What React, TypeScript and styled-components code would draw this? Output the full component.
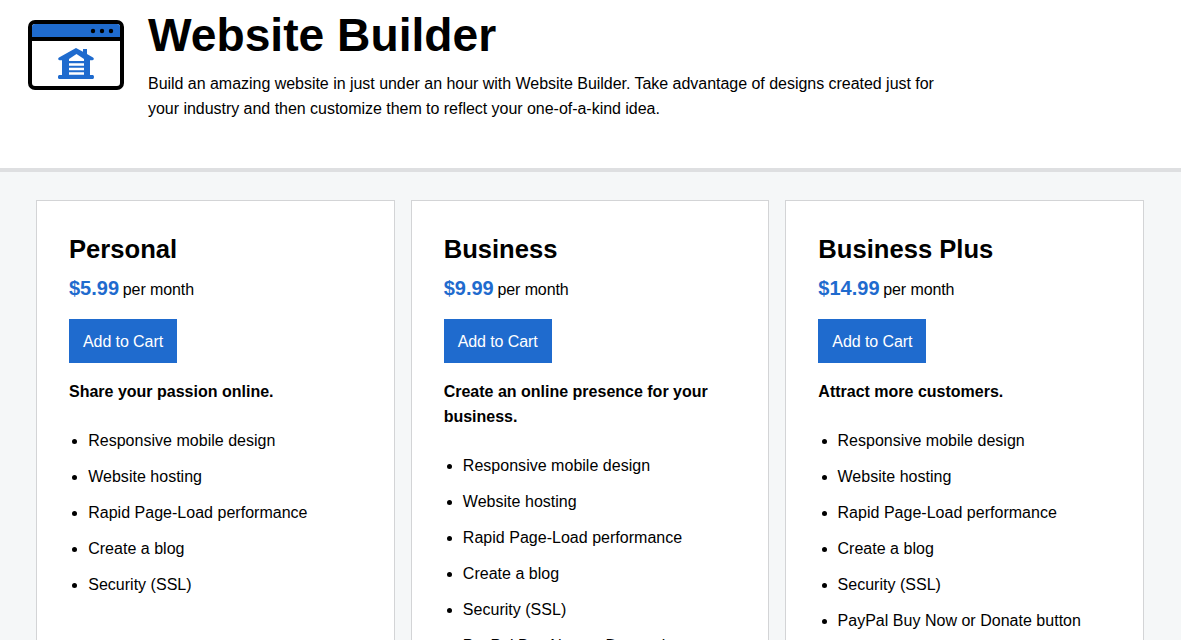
import styled, { createGlobalStyle } from 'styled-components'

const GlobalStyle = createGlobalStyle`
  html, body {
    margin: 0;
    height: 640px;
    overflow: hidden;
    background: #f5f7f8;
    color: #000;
    font-family: "Liberation Sans", Arial, sans-serif;
    font-size: 16px;
    line-height: 25px;
  }
`

const Header = styled.header`
  display: flex;
  align-items: flex-start;
  gap: 24px;
  height: 160px;
  padding: 8px 28px 0;
  background: #fff;
  border-bottom: 4px solid #dedfe1;
`

const HeaderLogo = styled.svg`
  flex: none;
  width: 96px;
  height: 70px;
  margin-top: 12px;
`

const HeaderText = styled.div`
  width: 800px;
`

const Title = styled.h1`
  margin: 0 0 9px;
  font-size: 46.2px;
  line-height: 54px;
  font-weight: 700;
`

const Intro = styled.p`
  margin: 0;
  letter-spacing: -0.03px;
`

const Plans = styled.main`
  display: grid;
  grid-template-columns: repeat(3, 1fr);
  gap: 16px;
  padding: 28px 37px 0 36px;
`

const Card = styled.section`
  background: #fff;
  border: 1px solid #d3d4d6;
  padding: 32px;
  min-height: 560px;
`

const PlanName = styled.h2`
  margin: 0 0 11px;
  font-size: 25.6px;
  line-height: 32px;
  font-weight: 700;
`

const Price = styled.div`
  margin-bottom: 17px;
  letter-spacing: -0.1px;
`

const Amount = styled.strong`
  margin-right: -0.6px;
  color: #1f6bce;
  font-size: 20px;
  letter-spacing: 0;
`

const CartButton = styled.button`
  display: block;
  width: 108px;
  height: 44px;
  padding: 0;
  border: 0;
  border-radius: 0;
  background: #1f6bce;
  color: #fff;
  font: inherit;
  letter-spacing: -0.08px;
  cursor: pointer;
`

const Tagline = styled.p`
  margin: 16px 0 0;
  font-weight: 700;
`

const Features = styled.ul`
  margin: 18px 0 0;
  padding: 0 0 0 19.2px;
  list-style: disc;
`

const Feature = styled.li`
  padding: 5.5px 0;
  letter-spacing: 0.02px;
`

const baseFeatures = [
  'Responsive mobile design',
  'Website hosting',
  'Rapid Page-Load performance',
  'Create a blog',
  'Security (SSL)',
]

const plans = [
  { name: 'Personal', price: '$5.99', tagline: 'Share your passion online.', features: baseFeatures },
  {
    name: 'Business',
    price: '$9.99',
    tagline: 'Create an online presence for your business.',
    features: [...baseFeatures, 'PayPal Buy Now or Donate button'],
  },
  {
    name: 'Business Plus',
    price: '$14.99',
    tagline: 'Attract more customers.',
    features: [...baseFeatures, 'PayPal Buy Now or Donate button'],
  },
]

function BuilderLogo() {
  return (
    <HeaderLogo viewBox='0 0 96 70'>
      <rect x='2' y='2' width='92' height='66' rx='5' fill='#fff' stroke='#000' strokeWidth='4' />
      <path d='M4 7a3 3 0 0 1 3-3h82a3 3 0 0 1 3 3v10H4z' fill='#1f6bce' />
      <rect x='4' y='17' width='88' height='4' fill='#000' />
      <circle cx='65' cy='11' r='2.200' fill='#000' />
      <circle cx='74' cy='11' r='2.200' fill='#000' />
      <circle cx='83' cy='11' r='2.200' fill='#000' />
      <path
        d='M48 28l7 3.800V29h4v5l6 3.500c1.500 1 .8 2.700-.8 2.700H62V55h2.800c1.600 0 1.600 4 0 4H31.200c-1.600 0-1.600-4 0-4H34V40.200h-2.200c-1.600 0-2.300-1.700-.8-2.700z'
        fill='#1f6bce'
      />
      <path d='M48.500 34l7.500 5v2H41v-2z' fill='#fff' />
      <path d='M41 44.500h15M41 49h15M41 53.500h15' stroke='#fff' strokeWidth='2.600' fill='none' />
    </HeaderLogo>
  )
}

export default function App() {
  return (
    <>
      <GlobalStyle />
      <Header>
        <BuilderLogo />
        <HeaderText>
          <Title>Website Builder</Title>
          <Intro>
            Build an amazing website in just under an hour with Website Builder. Take advantage of designs created just
            for your industry and then customize them to reflect your one-of-a-kind idea.
          </Intro>
        </HeaderText>
      </Header>
      <Plans>
        {plans.map((plan) => (
          <Card key={plan.name}>
            <PlanName>{plan.name}</PlanName>
            <Price>
              <Amount>{plan.price}</Amount> per month
            </Price>
            <CartButton>Add to Cart</CartButton>
            <Tagline>{plan.tagline}</Tagline>
            <Features>
              {plan.features.map((feature) => (
                <Feature key={feature}>{feature}</Feature>
              ))}
            </Features>
          </Card>
        ))}
      </Plans>
    </>
  )
}
